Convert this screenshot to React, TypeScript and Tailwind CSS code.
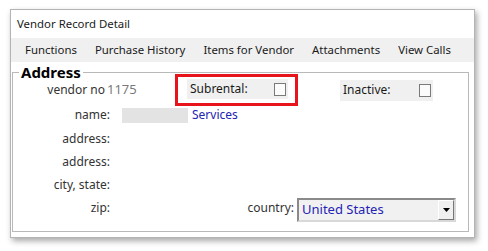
import React from "react";

const font = { fontFamily: '"Noto Sans", "Open Sans", Arial, sans-serif' };

function Check() {
  return <span className="block w-[12px] h-[13px] border border-[#7a7a7a] bg-[#fbfbfb]" />;
}

function Field({ label, h = "h-[24px]", children }: { label: string; h?: string; children?: React.ReactNode }) {
  return (
    <div className={`flex items-center ${h}`}>
      <span className="w-[97px] text-right text-[#333]">{label}</span>
      <div className="ml-[12px] flex items-center flex-1">{children}</div>
    </div>
  );
}

export default function App() {
  const menu = ["Functions", "Purchase History", "Items for Vendor", "Attachments", "View Calls"];

  return (
    <div className="w-[488px] h-[251px] bg-white overflow-hidden text-[11.4px] text-[#1a1a1a]" style={font}>
      <div className="ml-[10px] mt-[9px] w-[465px] h-[229px] border border-[#b4b4b4] bg-white shadow-[2px_3px_6px_rgba(0,0,0,0.35)] flex flex-col">
        <div className="h-[28px] pl-[6px] flex items-center">Vendor Record Detail</div>

        <div className="h-[24px] bg-[#f0f0f0] flex items-center pl-[14px] gap-[18px]">
          {menu.map((m) => (
            <span key={m}>{m}</span>
          ))}
        </div>

        <div className="relative mt-[10px] ml-[1px] mr-[5px] mb-[5px] flex-1 border border-[#b9b9b9] pt-[5px] text-[12px]">
          <span className="absolute left-[6px] -top-[10px] bg-white px-[2px] text-[15px] leading-[18px] font-bold text-black">
            Address
          </span>

          <div className="flex items-center h-[24px]">
            <div className="w-[162px] flex items-center">
              <span className="w-[92px] text-right text-[#333]">vendor no</span>
              <span className="ml-[2px] text-[#7a7a7a] text-[13px]">1175</span>
            </div>
            <div className="border-[3px] border-[#e8141b] pl-[9px] pr-[7px] pt-[2px] pb-[4px] shrink-0">
              <div className="w-[101px] h-[20px] bg-[#f0f0f0] flex items-center justify-between pl-[3px] pr-[2px]">
                <span>Subrental:</span>
                <Check />
              </div>
            </div>
            <div className="ml-[42px] w-[93px] h-[21px] bg-[#f0f0f0] flex items-center justify-between pl-[3px] pr-[2px]">
              <span>Inactive:</span>
              <Check />
            </div>
          </div>

          <div className="mt-[1px]">
            <Field label="name:">
              <span className="w-[66px] h-[15px] bg-[#e3e3e3]" />
              <span className="ml-[4px] text-[#2323b4]">Services</span>
            </Field>
          </div>
          <Field label="address:" />
          <Field label="address:" h="h-[22px]" />
          <Field label="city, state:" h="h-[23px]" />
          <div className="flex items-center h-[24px] pr-[12px]">
            <span className="w-[97px] text-right text-[#333]">zip:</span>
            <span className="ml-auto text-[#333]">country:</span>
            <div className="ml-[3px] mt-[3px] w-[159px] h-[24px] border-2 border-t-[#8a8a8a] border-l-[#8a8a8a] border-r-[#d8d8d8] border-b-[#d8d8d8] bg-[#f2f1f1] flex items-center">
              <span className="pl-[3px] text-[13px] text-[#2323b4] flex-1">United States</span>
              <span className="w-[16px] h-[20px] bg-[#f0f0f0] border border-t-white border-l-white border-r-[#777] border-b-[#777] flex items-center justify-center">
                <svg width="7" height="4" viewBox="0 0 7 4">
                  <path d="M0 0h7L3.5 4z" fill="#000" />
                </svg>
              </span>
            </div>
          </div>
        </div>
      </div>
    </div>
  );
}
